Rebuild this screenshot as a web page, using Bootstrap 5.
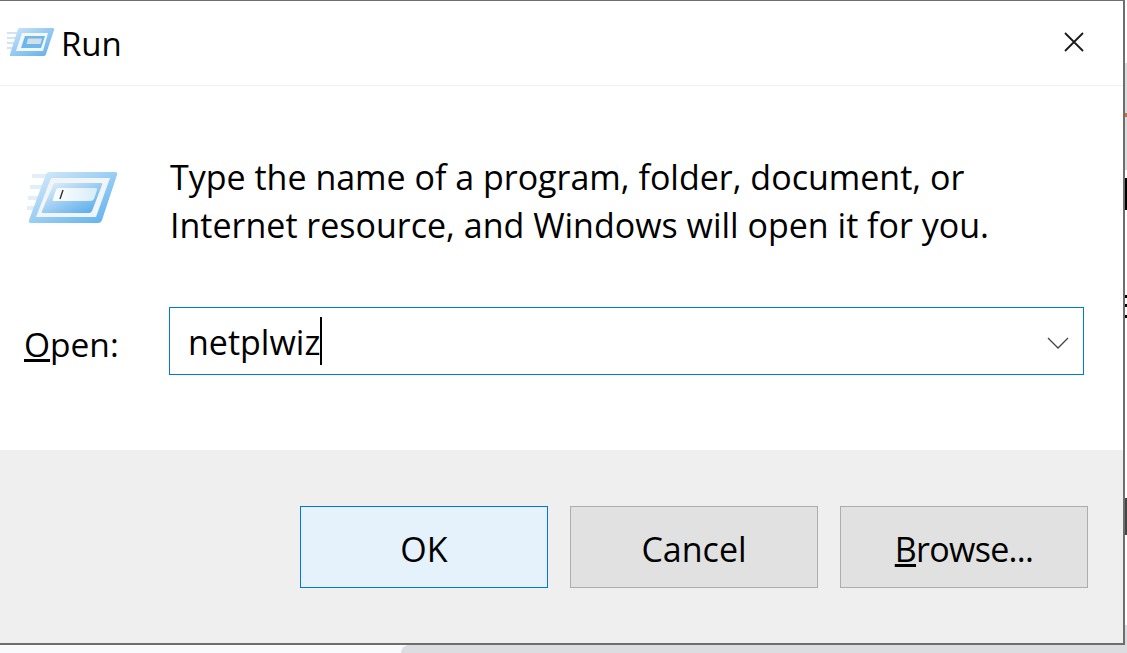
<!DOCTYPE html>
<html lang="en">
<head>
<meta charset="utf-8">
<title>Run</title>
<link rel="stylesheet" href="https://cdn.jsdelivr.net/npm/bootstrap@5.3.0/dist/css/bootstrap.min.css">
<style>
html,body{height:653px;overflow:hidden;background:#f9fafc;}
body{font-family:"Open Sans","Noto Sans",sans-serif;color:#000;}
.run-win{width:1125px;height:645px;background:#fff;border-top:1px solid #6e6e6e;border-right:2px solid #6e6e6e;border-bottom:2px solid #6e6e6e;}
.run-title{height:85px;border-bottom:1px solid #f0f0f0;padding-left:7px;}
.run-title-text{font-size:33px;margin-left:6px;line-height:1;}
.run-close{width:20px;height:20px;margin-right:39px;background:none;border:0;padding:0;margin-top:-2px;}
.run-body{height:364px;}
.run-desc{padding:67px 0 0 22px;}
.run-big{margin-top:17px;}
.run-desc p{font-size:34px;line-height:48px;margin:0 0 0 36px;}
.run-open{padding-left:24px;margin-top:58px;height:68px;}
.run-open-label{font-size:33.500px;width:145px;padding-top:7px;}
.run-field{width:915px;height:68px;border:1px solid #0078d7;padding:3px 14px 0 18px;font-size:34px;}
.run-caret{width:1.500px;height:48px;background:#000;margin-top:-3px;}
.run-foot{height:193px;background:#efefef;padding:56px 35px 0 0;gap:22px;}
.run-btn{width:248px;height:82px;background:#e1e1e1;border:1px solid #adadad;border-radius:0;font-size:34px;color:#000;padding:4px 0 0;}
.run-btn-default{background:#e5f1fb;border-color:#0078d7;}
.run-browse{letter-spacing:-.7px;}
.run-strip{width:2px;height:645px;background:#fff;}
.run-strip-a{height:63px;}
.run-strip-b{height:50px;background:#dcdcdc;}
.run-strip-c{height:4px;background:#c8703a;}
.run-strip-d{height:53px;background:#dcdcdc;}
.run-strip-e{height:8px;}
.run-strip-f{height:32px;background:#000;}
.run-strip-g{height:85px;}
.run-strip-h{height:3px;background:#000;}
.run-strip-i{height:6px;}
.run-strip-j{height:8px;}
.run-strip-k{height:180px;}
.run-strip-l{height:37px;background:#444;}
.run-strip-m{height:90px;}
.run-strip-n{flex-grow:1;background:#dcdde1;}
.run-under{height:8px;}
.run-under-l{width:401px;}
.run-under-r{background:#dcdde1;border-top-left-radius:8px;}
</style>
</head>
<body>
<div class="d-flex">
<div class="run-win d-flex flex-column">
  <div class="run-title d-flex align-items-center justify-content-between">
    <div class="d-flex align-items-center">
      <svg width="48" height="32" viewBox="0 0 48 32" aria-hidden="true">
        <defs><linearGradient id="g1" x1="0" y1="0" x2="1" y2="1"><stop offset="0" stop-color="#cfe6f9"/><stop offset="1" stop-color="#5caeea"/></linearGradient></defs>
        <path d="M0 6h12M0 11h10M0 16h8M0 21h6" stroke="#cfe4f6" stroke-width="2"/>
        <path d="M11 2Q11.500 1 13 1L46 1Q47.500 1 47 3L39 27Q38.500 29 37 29L4 29Q2 29 3 27Z" fill="url(#g1)"/>
        <path d="M15 6L41 6L36 24L9 24Z" fill="#f2f7fb"/>
        <path d="M18 9L38 9L34 21L14 21Z" fill="#6db7ec"/>
        <path d="M21 11.500L35 11.500L33.500 17L19.500 17Z" fill="#d6dee8"/>
      </svg>
      <span class="run-title-text">Run</span>
    </div>
    <button class="run-close" type="button" aria-label="Close">
      <svg width="20" height="20" viewBox="0 0 20 20" class="d-block"><path d="M1 1L19 19M19 1L1 19" stroke="#1a1a1a" stroke-width="1.800"/></svg>
    </button>
  </div>
  <div class="run-body">
    <div class="run-desc d-flex">
      <svg width="112" height="60" viewBox="0 0 112 60" class="flex-shrink-0 run-big" aria-hidden="true">
        <defs>
          <linearGradient id="g2" x1="0" y1="0" x2="1" y2="1"><stop offset="0" stop-color="#dcedfa"/><stop offset="1" stop-color="#58aeed"/></linearGradient>
          <linearGradient id="g3" x1="0" y1="0" x2="1" y2="1"><stop offset="0" stop-color="#e9f3fb"/><stop offset="1" stop-color="#4da6ea"/></linearGradient>
          <linearGradient id="g4" x1="0" y1="0" x2="1" y2="0"><stop offset="0" stop-color="#fff"/><stop offset="1" stop-color="#d8ecf9"/></linearGradient>
        </defs>
        <path d="M10 6H26M8 17H22M6 28H18M5 38H14" stroke="#e2eff9" stroke-width="4"/>
        <path d="M24 4Q25 2 28 2L93 2Q96 2 95 5L80 50Q79 53 76 53L9 53Q6 53 7 50Z" fill="url(#g2)"/>
        <path d="M29 8L88 8L74 47L14 47Z" fill="#f1f5f8"/>
        <path d="M33 13L79 13Q81 13 80 15L70 41Q69 43 67 43L21 43Q19 43 20 41L31 15Q32 13 33 13Z" fill="url(#g3)"/>
        <path d="M36 18H73Q76 18 75 20L72 29Q71 31 68 31H32Q30 31 31 29L34 20Q35 18 36 18Z" fill="url(#g4)"/>
        <path d="M41 20L38 29" stroke="#333" stroke-width="1.400"/>
      </svg>
      <p>Type the name of a program, folder, document, or<br>Internet resource, and Windows will open it for you.</p>
    </div>
    <div class="run-open d-flex align-items-center">
      <div class="run-open-label"><u>O</u>pen:</div>
      <div class="run-field d-flex align-items-center">
        <span>netplwiz</span><span class="run-caret"></span>
        <svg width="22" height="12" viewBox="0 0 22 12" class="ms-auto" aria-hidden="true"><path d="M1 1L11 11L21 1" fill="none" stroke="#444" stroke-width="1.300"/></svg>
      </div>
    </div>
  </div>
  <div class="run-foot d-flex justify-content-end align-items-start">
    <button class="btn run-btn run-btn-default" type="button">OK</button>
    <button class="btn run-btn" type="button">Cancel</button>
    <button class="btn run-btn run-browse" type="button"><u>B</u>rowse...</button>
  </div>
</div>
<div class="run-strip d-flex flex-column">
  <div class="run-strip-a"></div><div class="run-strip-b"></div><div class="run-strip-c"></div><div class="run-strip-d"></div>
  <div class="run-strip-e"></div><div class="run-strip-f"></div><div class="run-strip-g"></div>
  <div class="run-strip-h"></div><div class="run-strip-i"></div><div class="run-strip-h"></div><div class="run-strip-j"></div><div class="run-strip-h"></div>
  <div class="run-strip-k"></div><div class="run-strip-l"></div><div class="run-strip-m"></div><div class="run-strip-n"></div>
</div>
</div>
<div class="run-under d-flex">
  <div class="run-under-l"></div>
  <div class="run-under-r flex-grow-1"></div>
</div>
</body>
</html>
